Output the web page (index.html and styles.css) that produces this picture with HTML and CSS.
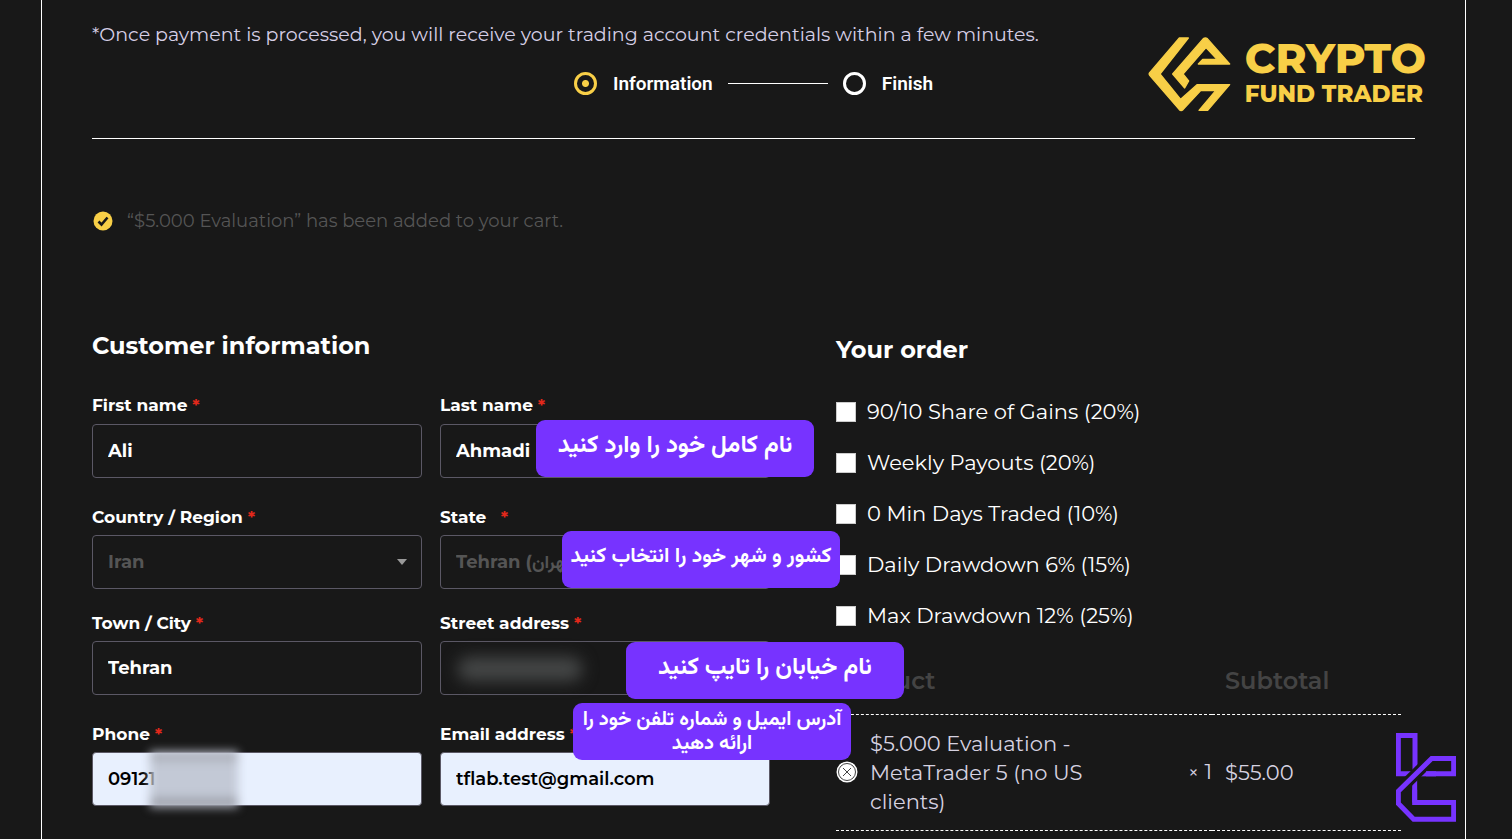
FILE: index.html
```html
<!DOCTYPE html>
<html lang="en">
<head>
    <meta charset="UTF-8">
    <meta name="viewport" content="width=device-width, initial-scale=1.0">
    <title>Checkout - Crypto Fund Trader</title>
    <link rel="stylesheet" href="styles.css">
</head>
<body>
    <div class="wrap">
        <header class="header">
            <p class="note">*Once payment is processed, you will receive your trading account credentials within a few minutes.</p>
            <ol class="steps">
                <li class="step active"><span class="dot"></span>Information</li>
                <li class="line"></li>
                <li class="step"><span class="dot"></span>Finish</li>
            </ol>
            <a href="#" class="logo">
                <svg width="83" height="75" viewBox="0 0 249 225" fill="#f8cf47" stroke="#f8cf47" stroke-width="4" stroke-linejoin="round">
                    <path d="M94 3H121L36 111L98 187L147 143H245L179 220H153L203 161H158L105 218Q99 223 94 218L5 115Q2 111 5 107Z"/>
                    <path d="M166 5Q172 1 178 5L245 81H151L164 67H207L174 32L105 111L122 132L110 153L74 111Z"/>
                </svg>
                <span class="logo-text">
                    <span class="logo-big">CRYPTO</span>
                    <span class="logo-small">FUND TRADER</span>
                </span>
            </a>
        </header>

        <div class="message">
            <svg width="20" height="20" viewBox="0 0 20 20">
                <circle cx="10" cy="10" r="9.5" fill="#f8cf47"/>
                <path d="M5.5 10.5L8.5 13.5L14.5 6.5" fill="none" stroke="#181818" stroke-width="2.6"/>
            </svg>
            <span>“$5.000 Evaluation” has been added to your cart.</span>
        </div>

        <form class="checkout">
            <section>
                <h2>Customer information</h2>
                <div class="fields">
                    <div class="field">
                        <label for="first">First name <i>*</i></label>
                        <input type="text" id="first" value="Ali">
                    </div>
                    <div class="field">
                        <label for="last">Last name <i>*</i></label>
                        <input type="text" id="last" value="Ahmadi">
                        <div class="tip tip-name" lang="fa" dir="rtl">نام کامل خود را وارد کنید</div>
                    </div>
                    <div class="field field-select arrow">
                        <label for="country">Country / Region <i>*</i></label>
                        <select id="country"><option>Iran</option></select>
                    </div>
                    <div class="field field-select">
                        <label for="state">State &nbsp; <i>*</i></label>
                        <select id="state"><option>Tehran (تهران)</option></select>
                        <div class="tip tip-state" lang="fa" dir="rtl">کشور و شهر خود را انتخاب کنید</div>
                    </div>
                    <div class="field">
                        <label for="city">Town / City <i>*</i></label>
                        <input type="text" id="city" value="Tehran">
                    </div>
                    <div class="field">
                        <label for="street">Street address <i>*</i></label>
                        <input type="text" id="street">
                        <span class="smear smear-street"></span>
                        <div class="tip tip-street" lang="fa" dir="rtl">نام خیابان را تایپ کنید</div>
                    </div>
                    <div class="field">
                        <label for="phone">Phone <i>*</i></label>
                        <input type="tel" id="phone" class="filled" value="09121">
                        <span class="smear smear-phone"></span>
                    </div>
                    <div class="field">
                        <label for="email">Email address <i>*</i></label>
                        <input type="email" id="email" class="filled" value="tflab.test@gmail.com">
                        <div class="tip tip-email" lang="fa" dir="rtl">آدرس ایمیل و شماره تلفن خود را ارائه دهید</div>
                    </div>
                </div>
            </section>

            <section class="order">
                <h2>Your order</h2>
                <ul class="addons">
                    <li><label><input type="checkbox">90/10 Share of Gains (20%)</label></li>
                    <li><label><input type="checkbox">Weekly Payouts (20%)</label></li>
                    <li><label><input type="checkbox">0 Min Days Traded (10%)</label></li>
                    <li><label><input type="checkbox">Daily Drawdown 6% (15%)</label></li>
                    <li><label><input type="checkbox">Max Drawdown 12% (25%)</label></li>
                </ul>
                <table>
                    <thead>
                        <tr><th>Product</th><th class="price">Subtotal</th></tr>
                    </thead>
                    <tbody>
                        <tr>
                            <td>
                                <div class="product">
                                    <button type="button" aria-label="Remove item">
                                        <svg width="22" height="22" viewBox="0 0 22 22" fill="none" stroke="#444">
                                            <circle cx="11" cy="11" r="10.5" fill="#fff" stroke="none"/>
                                            <circle cx="11" cy="11" r="8.5"/>
                                            <path d="M7 7L15 15M15 7L7 15"/>
                                        </svg>
                                    </button>
                                    <span class="name">$5.000 Evaluation - MetaTrader 5 (no US clients)</span>
                                    <span class="qty"><small>×</small> 1</span>
                                </div>
                            </td>
                            <td class="price">$55.00</td>
                        </tr>
                    </tbody>
                </table>
            </section>
        </form>
    </div>

    <svg class="mark" width="60" height="89" viewBox="0 0 180 266" fill="none" stroke="#7733ff" stroke-width="15">
        <path d="M60 122H7V7H57V125M56 125V208"/>
        <path d="M60 122H120"/>
        <path d="M107 76L20 161" stroke="#181818" stroke-width="34"/>
        <path d="M90 122H173V76H107L7 174V211L53 258H173V208H56V170"/>
    </svg>
</body>
</html>
```
FILE: styles.css
```css
* {
    box-sizing: border-box;
}
body {
    margin: 0;
    background-color: #181818;
    color: #fff;
    font-family: Montserrat, Inter, Vazirmatn, "DejaVu Sans", sans-serif;
}
h2, p, ol, ul {
    margin: 0;
    padding: 0;
    list-style: none;
}
.wrap {
    min-height: 100vh;
    margin: 0 46px 0 41px;
    padding: 0 50px;
    border-left: 1px solid #fff;
    border-right: 1px solid #fff;
}

/* header */
.header {
    display: grid;
    grid-template-columns: minmax(0, 1fr) auto minmax(0, 1fr);
    grid-template-rows: 58px 52px;
    align-items: center;
    padding: 5px 0 23px;
    border-bottom: 1px solid #fff;
}
.note {
    grid-row: 1;
    grid-column: 1 / 4;
    font-size: 19px;
    color: #d6cfe6;
}
.steps {
    grid-row: 2;
    grid-column: 2;
    display: flex;
    align-items: center;
    gap: 15px;
    font-family: Roboto, sans-serif;
    font-size: 19px;
    font-weight: 600;
    margin-top: -12px;
}
.step {
    display: flex;
    align-items: center;
    gap: 16px;
}
.dot {
    width: 23px;
    height: 23px;
    border: 3px solid #fff;
    border-radius: 50%;
}
.active .dot {
    border-color: #f8cf47;
    background: radial-gradient(circle, #f8cf47 3px, transparent 4px);
}
.line {
    width: 100px;
    height: 1px;
    background-color: #fff;
}
.logo {
    grid-row: 1 / 3;
    grid-column: 3;
    justify-self: end;
    display: flex;
    align-items: center;
    gap: 14px;
    margin-right: -11px;
    margin-top: 28px;
    color: #f8cf47;
    text-decoration: none;
    font-weight: 800;
}
.logo-text {
    display: flex;
    flex-direction: column;
}
.logo-big {
    font-size: 42px;
    line-height: 40px;
}
.logo-small {
    font-size: 23px;
    line-height: 32px;
}

.message {
    display: flex;
    align-items: center;
    gap: 14px;
    height: 24px;
    margin-top: 70px;
    padding-left: 1px;
    font-size: 18px;
    color: #555;
}

/* columns */
.checkout {
    display: grid;
    grid-template-columns: 6fr 5fr;
    gap: 66px;
    padding: 97px 14px 0 0;
}
h2 {
    font-size: 24px;
    line-height: 32px;
    font-weight: 700;
}
.fields {
    display: grid;
    grid-template-columns: 1fr 1fr;
    column-gap: 18px;
    margin-top: 36px;
}
.field {
    position: relative;
    margin-bottom: 32px;
}
.field-select {
    margin-bottom: 27px;
}
.field > label {
    display: block;
    height: 26px;
    line-height: 14px;
    font-size: 17px;
    font-weight: 700;
}
.field-select > label,
.field-select ~ .field > label {
    height: 25px;
}
.field i {
    color: #e2281b;
    font-style: normal;
}
.field input,
.field select {
    display: block;
    width: 100%;
    height: 54px;
    padding: 0 15px;
    border: 1px solid #5b5865;
    border-radius: 4px;
    background-color: transparent;
    color: #fff;
    font-family: inherit;
    font-size: 18px;
    font-weight: 700;
    appearance: none;
}
.field select {
    color: #555;
}
.field .filled {
    background-color: #e8f0fe;
    color: #000;
    font-weight: 600;
}
.arrow::after {
    content: "";
    position: absolute;
    right: 15px;
    bottom: 24px;
    border: 5px solid transparent;
    border-top: 6px solid #999;
    border-bottom: 0;
}

/* hidden values */
.smear {
    position: absolute;
    border-radius: 10px;
    filter: blur(8px);
}
.smear-street {
    left: 18px;
    bottom: 14px;
    width: 124px;
    height: 24px;
    background-color: #454747;
}
.smear-phone {
    left: 58px;
    bottom: -2px;
    width: 88px;
    height: 57px;
    background: linear-gradient(#a0a3ab, #c3c9d6 25%, #c3c9d6 75%, #8a8c94);
    border-radius: 0;
    filter: blur(5px);
}

/* purple hints */
.tip {
    position: absolute;
    z-index: 1;
    display: flex;
    align-items: center;
    justify-content: center;
    width: 278px;
    height: 57px;
    padding: 0 6px 6px;
    border-radius: 9px;
    background-color: #7733ff;
    font-family: Vazirmatn, "DejaVu Sans Condensed", "DejaVu Sans", sans-serif;
    font-size: 24px;
    font-weight: 700;
    text-align: center;
    white-space: nowrap;
}
.tip-name {
    left: 96px;
    top: 22px;
}
.tip-state {
    left: 122px;
    top: 21px;
    font-size: 21px;
}
.tip-street {
    left: 186px;
    top: 26px;
}
.tip-email {
    left: 133px;
    top: -24px;
    padding: 0 6px;
    font-size: 20px;
    line-height: 24px;
    white-space: normal;
}

/* order */
.order {
    padding-top: 4px;
}
.addons {
    display: grid;
    gap: 19px;
    margin-top: 30px;
}
.addons label {
    display: flex;
    align-items: center;
    gap: 11px;
    font-size: 21px;
    line-height: 32px;
}
.addons input {
    width: 20px;
    height: 20px;
    margin: 0;
    border: 1px solid #ccc;
    background-color: #fff;
    appearance: none;
}
table {
    width: 100%;
    margin-top: 16px;
    border-collapse: collapse;
}
th, td {
    padding: 0;
    border-bottom: 1px dashed #fff;
    text-align: left;
}
th {
    height: 66px;
    font-size: 24px;
    font-weight: 600;
    color: #444;
}
td {
    height: 116px;
    font-size: 21px;
    line-height: 29px;
    color: #d6d2e0;
}
.price {
    width: 189px;
    padding-left: 13px;
}
.product {
    display: flex;
    align-items: center;
}
.product button {
    display: flex;
    padding: 0;
    border: 0;
    background: none;
}
.name {
    width: 228px;
    margin-left: 12px;
}
.qty {
    margin-left: auto;
}
.qty small {
    font-size: 19px;
}

.mark {
    position: fixed;
    right: 56px;
    bottom: 17px;
}
```
